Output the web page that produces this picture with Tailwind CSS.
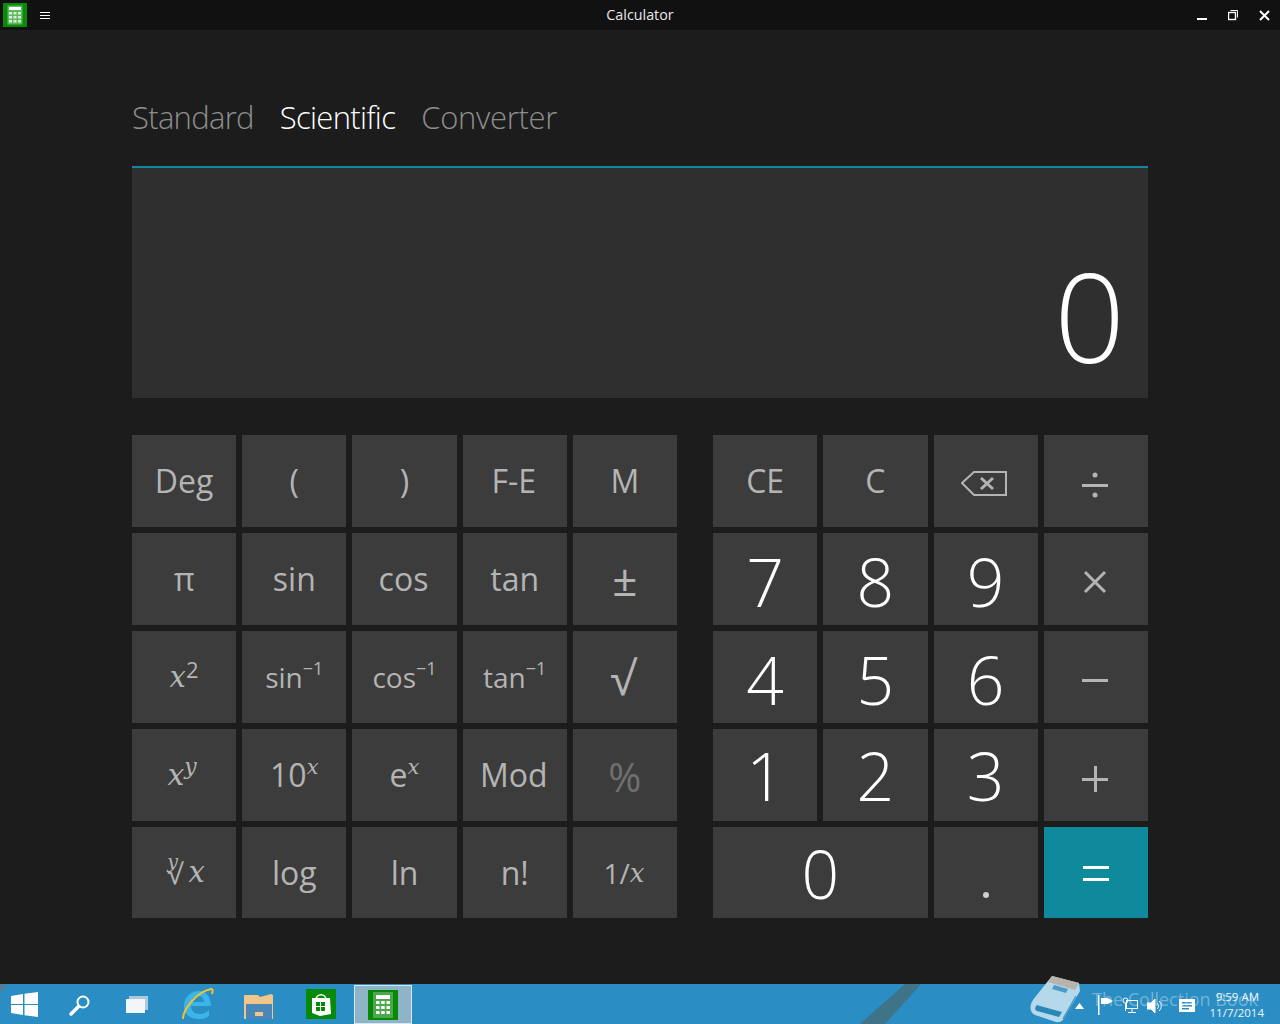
<!DOCTYPE html>
<html><head><meta charset="utf-8"><script src="https://cdn.jsdelivr.net/npm/@tailwindcss/browser@4"></script></head>
<body class="m-0 overflow-hidden">
<div class="relative flex h-[1024px] w-[1280px] flex-col bg-[#1c1c1c] font-['Open_Sans','Noto_Sans',sans-serif]">
  <header class="relative flex h-[30px] shrink-0 items-center bg-[#111111]">
    <div class="ml-[3px] flex h-[24px] w-[24px] items-center justify-center bg-[#078a07]">
      <svg width="16" height="20" viewBox="0 0 16 20"><rect x="0.5" y="0.5" width="15" height="19" fill="#5fb85f"/><rect x="2" y="2" width="12" height="3" fill="#fff"/><g fill="#d8f0d8"><rect x="2" y="7" width="3" height="2.5"/><rect x="6.5" y="7" width="3" height="2.5"/><rect x="11" y="7" width="3" height="2.5"/><rect x="2" y="11" width="3" height="2.5"/><rect x="6.5" y="11" width="3" height="2.5"/><rect x="11" y="11" width="3" height="2.5"/><rect x="2" y="15" width="3" height="2.5"/><rect x="6.5" y="15" width="3" height="2.5"/><rect x="11" y="15" width="3" height="2.5"/></g></svg>
    </div>
    <div class="ml-[13px] flex w-[10px] flex-col gap-[2px]"><i class="h-px bg-white"></i><i class="h-px bg-white"></i><i class="h-px bg-white"></i></div>
    <div class="absolute inset-x-0 top-[5px] text-center text-[14.3px] leading-[20px] text-[#e8e8e8]">Calculator</div>
    <div class="absolute right-[10px] top-[10px] flex items-start gap-[21px]">
      <svg width="10" height="11" viewBox="0 0 10 11"><rect y="8" width="10" height="2" fill="#fff"/></svg>
      <svg width="10" height="11" viewBox="0 0 10 11" fill="none" stroke="#fff"><rect x="0.5" y="2.5" width="7" height="7" stroke-width="1.4"/><path d="M2.5 0.5H9.5V7.5"/></svg>
      <svg width="11" height="11" viewBox="0 0 11 11" stroke="#fff" stroke-width="2"><path d="M1 1L10 10M10 1L1 10"/></svg>
    </div>
  </header>

  <main class="flex-1 px-[132px]">
    <nav class="flex h-[136px] items-start gap-[26px] pt-[67px] text-[31px] font-light leading-[40px] tracking-[-0.7px] text-[#8e8e8e]">
      <span>Standard</span><span class="text-white">Scientific</span><span class="tracking-[-0.3px]">Converter</span>
    </nav>
    <section class="flex h-[232px] items-end justify-end border-t-2 border-[#0e8a9c] bg-[#2f2f2f] pb-[18px] pr-[23px]">
      <span class="text-[124px] font-light leading-[130px] text-white">0</span>
    </section>
    <div class="mt-[37px] flex h-[483px] gap-[36px] text-[#b4b4b4]">
      <div class="grid w-[545px] grid-cols-5 grid-rows-[92px_92px_92px_92px_91px] gap-[6px] text-[32px] leading-none">
        <button class="flex items-center justify-center bg-[#3c3c3c]">Deg</button>
        <button class="flex items-center justify-center bg-[#3c3c3c]">(</button>
        <button class="flex items-center justify-center bg-[#3c3c3c]">)</button>
        <button class="flex items-center justify-center bg-[#3c3c3c] pr-[2px]">F-E</button>
        <button class="flex items-center justify-center bg-[#3c3c3c]">M</button>

        <button class="flex items-center justify-center bg-[#3c3c3c]">π</button>
        <button class="flex items-center justify-center bg-[#3c3c3c]">sin</button>
        <button class="flex items-center justify-center bg-[#3c3c3c] pr-[2px]">cos</button>
        <button class="flex items-center justify-center bg-[#3c3c3c]">tan</button>
        <button class="flex items-center justify-center bg-[#3c3c3c] text-[44px]">±</button>

        <button class="flex items-center justify-center bg-[#3c3c3c] font-['DejaVu_Serif'] text-[29px] italic"><span>x</span><span class="mb-[16px] font-['Open_Sans'] text-[22px] not-italic leading-none">2</span></button>
        <button class="flex items-center justify-center bg-[#3c3c3c] text-[28px]">sin<sup class="text-[18px]">−1</sup></button>
        <button class="flex items-center justify-center bg-[#3c3c3c] text-[28px]">cos<sup class="text-[18px]">−1</sup></button>
        <button class="flex items-center justify-center bg-[#3c3c3c] text-[28px]">tan<sup class="text-[18px]">−1</sup></button>
        <button class="flex items-center justify-center bg-[#3c3c3c] pr-[4px] text-[46px] leading-none">√</button>

        <button class="flex items-center justify-center bg-[#3c3c3c] pr-[4px] font-['DejaVu_Serif'] text-[30px] italic"><span>x</span><span class="mb-[16px] text-[22px]">y</span></button>
        <button class="flex items-center justify-center bg-[#3c3c3c]">10<span class="mb-[16px] font-['DejaVu_Serif'] text-[21px] italic">x</span></button>
        <button class="flex items-center justify-center bg-[#3c3c3c]">e<span class="mb-[16px] font-['DejaVu_Serif'] text-[21px] italic">x</span></button>
        <button class="flex items-center justify-center bg-[#3c3c3c] pr-[2px]">Mod</button>
        <button class="flex items-center justify-center bg-[#3c3c3c] pt-[4px] text-[40px] text-[#6f6f6f]">%</button>

        <button class="flex items-center justify-center gap-[6px] bg-[#3c3c3c] pl-[4px] font-['DejaVu_Serif'] text-[29px] italic"><span class="relative font-['Open_Sans'] text-[28px] not-italic">√<i class="absolute -top-[7px] left-[0px] font-['DejaVu_Serif'] text-[19px]">y</i></span><span>x</span></button>
        <button class="flex items-center justify-center bg-[#3c3c3c]">log</button>
        <button class="flex items-center justify-center bg-[#3c3c3c]">ln</button>
        <button class="flex items-center justify-center bg-[#3c3c3c]">n!</button>
        <button class="flex items-center justify-center bg-[#3c3c3c] pr-[2px] text-[28px]">1/<i class="font-['DejaVu_Serif'] text-[26px]">x</i></button>
      </div>
      <div class="grid w-[435px] grid-cols-4 grid-rows-[92px_92px_92px_92px_91px] gap-[6px] text-[32px] leading-none">
        <button class="flex items-center justify-center bg-[#3c3c3c]">CE</button>
        <button class="flex items-center justify-center bg-[#3c3c3c]">C</button>
        <button class="flex items-center justify-center bg-[#3c3c3c] pr-[3px] pt-[3px]"><svg width="46" height="26" viewBox="0 0 46 26" fill="none" stroke="#b4b4b4" stroke-width="2"><path d="M45 2H13L1 13L13 25H45Z"/><path d="M20 8L32 19M32 8L20 19" stroke-width="3"/></svg></button>
        <button class="flex items-center justify-center bg-[#3c3c3c] pr-[2px] pt-[8px]"><svg width="26" height="26" viewBox="0 0 26 26" fill="#b4b4b4"><circle cx="13" cy="3" r="2.5"/><rect y="12" width="26" height="3"/><circle cx="13" cy="23" r="2.5"/></svg></button>

        <button class="flex items-center justify-center bg-[#3c3c3c] pt-[3px] text-[66px] font-light text-white">7</button>
        <button class="flex items-center justify-center bg-[#3c3c3c] pt-[3px] text-[66px] font-light text-white">8</button>
        <button class="flex items-center justify-center bg-[#3c3c3c] pt-[3px] text-[66px] font-light text-white">9</button>
        <button class="flex items-center justify-center bg-[#3c3c3c] pr-[2px] pt-[6px]"><svg width="24" height="24" viewBox="0 0 24 24" stroke="#b4b4b4" stroke-width="3"><path d="M2 2L22 22M22 2L2 22"/></svg></button>

        <button class="flex items-center justify-center bg-[#3c3c3c] pt-[4px] text-[66px] font-light text-white">4</button>
        <button class="flex items-center justify-center bg-[#3c3c3c] pt-[4px] text-[66px] font-light text-white">5</button>
        <button class="flex items-center justify-center bg-[#3c3c3c] pt-[4px] text-[66px] font-light text-white">6</button>
        <button class="flex items-center justify-center bg-[#3c3c3c] pr-[2px] pt-[8px]"><svg width="26" height="4" viewBox="0 0 26 4" fill="#b4b4b4"><rect width="26" height="3"/></svg></button>

        <button class="flex items-center justify-center bg-[#3c3c3c] text-[66px] font-light text-white">1</button>
        <button class="flex items-center justify-center bg-[#3c3c3c] text-[66px] font-light text-white">2</button>
        <button class="flex items-center justify-center bg-[#3c3c3c] text-[66px] font-light text-white">3</button>
        <button class="flex items-center justify-center bg-[#3c3c3c] pr-[2px] pt-[7px]"><svg width="26" height="26" viewBox="0 0 26 26" fill="#b4b4b4"><rect y="12" width="26" height="3"/><rect x="12" width="3" height="26"/></svg></button>

        <button class="col-span-2 flex items-center justify-center bg-[#3c3c3c] text-[66px] font-light text-white">0</button>
        <button class="flex items-end justify-center bg-[#3c3c3c] pb-[20px] text-white"><i class="h-[6px] w-[6px] rounded-full bg-[#d0d0d0]"></i></button>
        <button class="flex items-center justify-center bg-[#0e8a9c] pt-[3px]"><svg width="26" height="16" viewBox="0 0 26 16" fill="#fff"><rect width="26" height="3"/><rect y="12" width="26" height="3"/></svg></button>
      </div>
    </div>
  </main>

  <footer class="relative flex h-[40px] shrink-0 items-center bg-[#2a8dc3] text-white">
    <svg class="absolute inset-0" width="1280" height="40" viewBox="0 0 1280 40"><path d="M0 0H8L0 10Z" fill="#4e7f9c"/><path d="M905 0H921L885 40H860Z" fill="#3f7488"/></svg>
    <svg class="absolute left-[11px] top-[8px]" width="27" height="25" viewBox="0 0 27 25" fill="#fff"><path d="M0 4L12 2V12H0Z"/><path d="M13.500 1.700L27 0V12H13.500Z"/><path d="M0 13H12V23L0 21Z"/><path d="M13.500 13H27V25L13.500 23.300Z"/></svg>
    <svg class="absolute left-[69px] top-[10px]" width="22" height="22" viewBox="0 0 22 22" fill="none" stroke="#fff"><circle cx="14" cy="8" r="5.500" stroke-width="2"/><path d="M9.500 12.500L2 20" stroke-width="3.500" stroke-linecap="round"/></svg>
    <svg class="absolute left-[126px] top-[12px]" width="22" height="18" viewBox="0 0 22 18"><rect x="3" y="0" width="19" height="14" fill="#a9c9dd"/><rect x="0" y="3" width="19" height="14" fill="#f2f6f8"/></svg>
    <svg class="absolute left-[182px] top-[2px]" width="32" height="36" viewBox="0 0 32 36"><path d="M2 20C2 11 9 5 17 5C24 5 29 11 29 20H9C9 25 13 28 17 28C21 28 24 27 27 24V30C23 33 20 33 16 33C8 33 2 28 2 20ZM10 16H22C22 12 19 10 16 10C13 10 11 12 10 16Z" fill="#39b5ea"/><path d="M1 33C1 24 14 6 29 3C31 3 31 5 30 8" fill="none" stroke="#f1c232" stroke-width="2"/></svg>
    <svg class="absolute left-[244px] top-[8px]" width="30" height="27" viewBox="0 0 30 27"><path d="M0 3H14L16 5L27 2L29 3V27H0Z" fill="#f0c68a"/><rect x="2" y="12" width="26" height="15" fill="#4a86b8"/><rect x="11" y="20" width="8" height="4" fill="#f0c68a"/></svg>
    <div class="absolute left-[306px] top-[5px] flex h-[30px] w-[30px] items-center justify-center bg-[#078a07]">
      <svg width="22" height="25" viewBox="0 0 22 25"><path d="M6 8C6 1 16 1 16 8" fill="none" stroke="#fff" stroke-width="1.500"/><path d="M2 6H20L21 22L10 24L2 21Z" fill="#fff"/><g fill="#078a07"><rect x="6" y="10" width="4" height="4"/><rect x="11" y="10" width="4" height="4"/><rect x="6" y="15" width="4" height="4"/><rect x="11" y="15" width="4" height="4"/></g></svg>
    </div>
    <div class="absolute left-[354px] top-[1px] flex h-[39px] w-[58px] items-center justify-center border border-[#d8e6ee] bg-[#8fb4c8]">
      <div class="flex h-[30px] w-[30px] items-center justify-center bg-[#078a07]">
        <svg width="20" height="26" viewBox="0 0 20 26"><rect width="20" height="26" fill="#4ba84b"/><rect x="3" y="3" width="14" height="4" fill="#fff"/><g fill="#fff"><rect x="3" y="9" width="3.500" height="3"/><rect x="8.200" y="9" width="3.500" height="3"/><rect x="13.500" y="9" width="3.500" height="3"/><rect x="3" y="14" width="3.500" height="3"/><rect x="8.200" y="14" width="3.500" height="3"/><rect x="13.500" y="14" width="3.500" height="3"/><rect x="3" y="19" width="3.500" height="3"/><rect x="8.200" y="19" width="3.500" height="3"/><rect x="13.500" y="19" width="3.500" height="3"/></g></svg>
      </div>
    </div>
    <svg class="absolute left-[1075px] top-[19px]" width="9" height="6" viewBox="0 0 9 6" fill="#fff"><path d="M0 6L4.500 0L9 6Z"/></svg>
    <svg class="absolute left-[1098px] top-[11px]" width="16" height="20" viewBox="0 0 16 20" fill="#fff"><rect width="1.500" height="20"/><path d="M3 3H10L15 6L10 9H3Z"/></svg>
    <svg class="absolute left-[1122px] top-[13px]" width="16" height="17" viewBox="0 0 16 17" fill="none" stroke="#fff"><rect x="4.500" y="3.500" width="11" height="8"/><circle cx="3.500" cy="3.500" r="2.500"/><path d="M3.500 6V14M6 15.500H14M10 12V15"/></svg>
    <svg class="absolute left-[1147px] top-[14px]" width="16" height="16" viewBox="0 0 16 16" fill="none" stroke="#fff"><path d="M0 5H4L8 1V15L4 11H0Z" fill="#fff"/><path d="M10 5C12 7 12 9 10 11M12 3C15 6 15 10 12 13"/></svg>
    <svg class="absolute left-[1179px] top-[15px]" width="16" height="13" viewBox="0 0 16 13"><rect width="16" height="13" fill="#fff"/><g fill="#2a8dc3"><rect x="3" y="3" width="10" height="1.500"/><rect x="3" y="6" width="10" height="1.500"/><rect x="3" y="9" width="7" height="1.500"/></g></svg>
    <div class="absolute right-[16px] top-[5px] text-right text-[11.5px] leading-[16px] text-[#eef6fb]"><div class="pr-[5px]">9:59 AM</div><div>11/7/2014</div></div>
    <div class="pointer-events-none absolute left-[1092px] top-[3px] text-[18px] leading-[24px] text-white/35">The Collection Book</div>
    <svg class="pointer-events-none absolute left-[1030px] -top-[8px]" width="52" height="48" viewBox="0 0 52 48"><path d="M22 0L49 7L50 15L33 44Q30 47 26 46L5 39Q-1 36 1 28Q2 25 6 20Z" fill="#b5d8ea"/><path d="M22 0L49 7L45 14L18 6Z" fill="#b8b3ac"/><path d="M24 9L38 13L36 17L22 13Z" fill="#4a9cc6"/><path d="M7 29Q3 33 7 35L29 41L32 36L10 30Z" fill="#2a88b8"/><path d="M33 43L46 20" stroke="#4a9cc6" stroke-width="1.500"/></svg>
  </footer>
</div>
</body></html>
